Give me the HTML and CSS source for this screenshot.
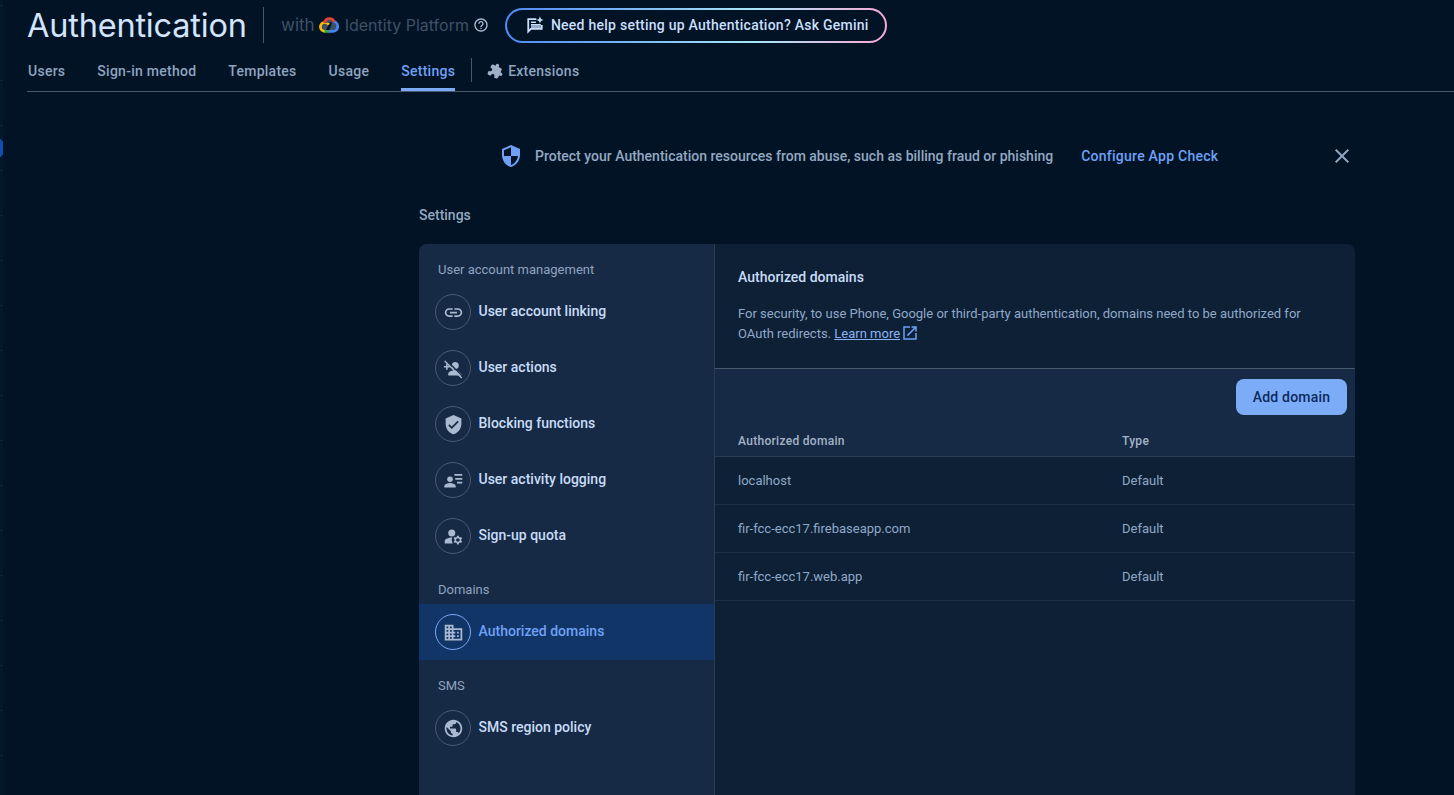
FILE: index.html
```html
<!DOCTYPE html>
<html lang="en">

<head>
    <meta charset="UTF-8">
    <meta name="viewport" content="width=device-width, initial-scale=1.0">
    <title>Authentication</title>
    <link rel="stylesheet" href="styles.css">
</head>

<body>
    <div class="rail">
        <span class="rail-dot"></span>
    </div>

    <div class="page">
        <header class="page-header">
            <div class="title-row">
                <h1 class="page-title">Authentication</h1>
                <span class="title-divider"></span>
                <div class="platform">
                    <span class="platform-with">with</span>
                    <svg class="cloud-logo" viewBox="0 0 20 16" fill="none" stroke-width="2.7">
                        <path stroke="#fbbc04" d="M6.200 14.400C3.400 14.400 1.400 12.400 1.400 9.800C1.400 7.300 3.400 5.300 5.900 5.300C7.600 5.300 9 6.200 9.800 7.600"/>
                        <path stroke="#34a853" d="M10.500 14.400H5.500"/>
                        <path stroke="#4285f4" d="M13.600 4C16.500 4.400 18.700 6.800 18.700 9.600C18.700 12.300 16.500 14.400 13.800 14.400H10"/>
                        <path stroke="#ea4335" d="M5.200 6C6 3.200 8 1.500 10.500 1.500C12.700 1.500 14.500 2.700 15.400 4.900"/>
                    </svg>
                    <span>Identity Platform</span>
                    <svg class="help-icon" viewBox="0 0 24 24"><path d="M11 18h2v-2h-2v2zm1-16C6.480 2 2 6.480 2 12s4.480 10 10 10 10-4.480 10-10S17.520 2 12 2zm0 18c-4.410 0-8-3.590-8-8s3.590-8 8-8 8 3.590 8 8-3.590 8-8 8zm0-14c-2.210 0-4 1.790-4 4h2c0-1.100.9-2 2-2s2 .9 2 2c0 2-3 1.750-3 5h2c0-2.250 3-2.500 3-5 0-2.210-1.790-4-4-4z"/></svg>
                </div>
                <button class="gemini-btn">
                    <svg class="gemini-icon" viewBox="0 0 20 20"><path d="M1.500 2.500h10v2H3.500v10.200l1.400-1.400h11.600V10h2v5.300H5.800L1.500 19.600z"/><path d="M5.500 6h5.500v1.800H5.500zM5.500 8.900h11v1.800h-11zM5.500 11.400h11v1.600h-11z"/><path d="M15.500.4l1.100 2.900 2.900 1.100-2.900 1.100-1.100 2.900-1.100-2.900-2.900-1.100 2.900-1.100z"/></svg>
                    Need help setting up Authentication? Ask Gemini
                </button>
            </div>
            <nav class="tabs">
                <a class="tab">Users</a>
                <a class="tab">Sign-in method</a>
                <a class="tab">Templates</a>
                <a class="tab">Usage</a>
                <a class="tab active">Settings</a>
                <span class="tab-divider"></span>
                <a class="tab tab-ext">
                    <svg class="ext-icon" viewBox="0 0 24 24"><path d="M20.500 11H19V7c0-1.100-.9-2-2-2h-4V3.500C13 2.120 11.880 1 10.500 1S8 2.120 8 3.500V5H4c-1.100 0-1.990.9-1.990 2v3.800H3.500c1.490 0 2.700 1.210 2.700 2.700s-1.210 2.700-2.700 2.700H2V20c0 1.100.9 2 2 2h3.800v-1.500c0-1.490 1.210-2.700 2.700-2.700 1.490 0 2.700 1.210 2.700 2.700V22H17c1.100 0 2-.9 2-2v-4h1.500c1.380 0 2.500-1.120 2.500-2.500S21.880 11 20.500 11z"/></svg>
                    Extensions
                </a>
            </nav>
        </header>

        <main class="content">
            <div class="notice">
                <svg class="notice-icon" viewBox="0 0 24 24"><path d="M12 1L3 5v6c0 5.550 3.840 10.740 9 12 5.160-1.260 9-6.450 9-12V5l-9-4zm0 10.990h7c-.53 4.120-3.280 7.790-7 8.940V12H5V6.300l7-3.110v8.800z"/></svg>
                <span class="notice-text">Protect your Authentication resources from abuse, such as billing fraud or phishing</span>
                <a class="notice-link">Configure App Check</a>
                <svg class="notice-close" viewBox="0 0 24 24"><path d="M19 6.410L17.590 5 12 10.590 6.410 5 5 6.410 10.590 12 5 17.590 6.410 19 12 13.410 17.590 19 19 17.590 13.410 12z"/></svg>
            </div>

            <h2 class="section-title">Settings</h2>

            <section class="card">
                <aside class="side">
                    <div class="side-label">User account management</div>
                    <div class="side-item">
                        <span class="side-icon"><svg viewBox="0 0 24 24"><path d="M3.900 12c0-1.710 1.390-3.100 3.100-3.100h4V7H7c-2.760 0-5 2.240-5 5s2.240 5 5 5h4v-1.900H7c-1.710 0-3.100-1.390-3.100-3.100zM8 13h8v-2H8v2zm9-6h-4v1.900h4c1.710 0 3.100 1.390 3.100 3.100s-1.390 3.100-3.100 3.100h-4V17h4c2.760 0 5-2.240 5-5s-2.240-5-5-5z"/></svg></span>
                        <span class="side-text">User account linking</span>
                    </div>
                    <div class="side-item">
                        <span class="side-icon"><svg viewBox="0 0 24 24"><circle cx="14" cy="8.500" r="4"/><path d="M6 20v-2c0-2.700 5.300-4 8-4 .9 0 2 .15 3.100.43L21.700 19v1zM1 9h2.500V6.500h1.800V9h2.500v1.800H5.300v2.500H3.500v-2.500H1z"/><path class="slash-gap" d="M4 1.500L23.500 21l-1 1L3 2.500z"/><path d="M2.500 2.800L22 22.300l-1.100 1.100L1.400 3.900z"/></svg></span>
                        <span class="side-text">User actions</span>
                    </div>
                    <div class="side-item">
                        <span class="side-icon"><svg viewBox="0 0 24 24"><path d="M12 1L3 5v6c0 5.550 3.840 10.740 9 12 5.160-1.260 9-6.450 9-12V5l-9-4zm-2 16l-4-4 1.410-1.410L10 14.170l6.590-6.590L18 9l-8 8z"/></svg></span>
                        <span class="side-text">Blocking functions</span>
                    </div>
                    <div class="side-item">
                        <span class="side-icon"><svg viewBox="0 0 24 24"><circle cx="8" cy="10.500" r="3.200"/><path d="M1.500 20v-1.800c0-2.300 4.300-3.400 6.500-3.400s6.500 1.100 6.500 3.400V20zM13 4.500h9v2h-9zM14 9h8v2h-8zM16 13.500h6v2h-6z"/></svg></span>
                        <span class="side-text">User activity logging</span>
                    </div>
                    <div class="side-item">
                        <span class="side-icon"><svg viewBox="0 0 24 24"><circle cx="10" cy="8" r="4"/><path d="M10.670 13.020c-.22-.01-.44-.02-.67-.02-2.420 0-4.680.67-6.610 1.820-.88.52-1.390 1.500-1.390 2.530V20h9.260c-.79-1.130-1.260-2.510-1.260-4 0-1.070.25-2.070.67-2.980z"/><path d="M20.750 16c0-.22-.03-.42-.06-.63l1.140-1.010-1-1.730-1.450.49c-.32-.27-.68-.48-1.080-.63L18 11h-2l-.3 1.490c-.4.15-.76.36-1.080.63l-1.450-.49-1 1.730 1.140 1.010c-.03.21-.06.41-.06.63s.03.42.06.63l-1.140 1.010 1 1.730 1.450-.49c.32.27.68.48 1.080.63L16 21h2l.3-1.490c.4-.15.76-.36 1.080-.63l1.450.49 1-1.730-1.140-1.010c.03-.21.06-.41.06-.63zM17 18c-1.100 0-2-.9-2-2s.9-2 2-2 2 .9 2 2-.9 2-2 2z"/></svg></span>
                        <span class="side-text">Sign-up quota</span>
                    </div>
                    <div class="side-label">Domains</div>
                    <div class="side-item selected">
                        <span class="side-icon"><svg viewBox="0 0 24 24"><path d="M12 7V3H2v18h20V7H12zM6 19H4v-2h2v2zm0-4H4v-2h2v2zm0-4H4V9h2v2zm0-4H4V5h2v2zm4 12H8v-2h2v2zm0-4H8v-2h2v2zm0-4H8V9h2v2zm0-4H8V5h2v2zm10 12h-8v-2h2v-2h-2v-2h2v-2h-2V9h8v10zm-2-8h-2v2h2v-2zm0 4h-2v2h2v-2z"/></svg></span>
                        <span class="side-text">Authorized domains</span>
                    </div>
                    <div class="side-label">SMS</div>
                    <div class="side-item">
                        <span class="side-icon"><svg viewBox="0 0 24 24"><path d="M12 2C6.480 2 2 6.480 2 12s4.480 10 10 10 10-4.480 10-10S17.520 2 12 2zm-1 17.930c-3.950-.49-7-3.850-7-7.930 0-.62.08-1.210.21-1.790L9 15v1c0 1.100.9 2 2 2v1.930zm6.900-2.540c-.26-.81-1-1.390-1.900-1.390h-1v-3c0-.55-.45-1-1-1H8v-2h2c.55 0 1-.45 1-1V7h2c1.100 0 2-.9 2-2v-.41c2.930 1.190 5 4.060 5 7.410 0 2.080-.8 3.970-2.100 5.390z"/></svg></span>
                        <span class="side-text">SMS region policy</span>
                    </div>
                </aside>

                <div class="detail">
                    <div class="detail-head">
                        <h3 class="detail-title">Authorized domains</h3>
                        <p class="detail-desc">For security, to use Phone, Google or third-party authentication, domains need to be authorized for OAuth redirects. <a class="learn-more">Learn more</a><svg class="open-icon" viewBox="0 0 24 24"><path d="M19 19H5V5h7V3H3v18h18v-9h-2v7zM14 3v2h3.590l-9.830 9.830 1.410 1.410L19 6.410V10h2V3h-7z"/></svg></p>
                    </div>
                    <div class="toolbar">
                        <button class="add-btn">Add domain</button>
                    </div>
                    <div class="table-row table-header">
                        <span>Authorized domain</span>
                        <span>Type</span>
                    </div>
                    <div class="table-row">
                        <span>localhost</span>
                        <span>Default</span>
                    </div>
                    <div class="table-row">
                        <span>fir-fcc-ecc17.firebaseapp.com</span>
                        <span>Default</span>
                    </div>
                    <div class="table-row">
                        <span>fir-fcc-ecc17.web.app</span>
                        <span>Default</span>
                    </div>
                </div>
            </section>
        </main>
    </div>
</body>

</html>
```

FILE: styles.css
```css
/* General Styles */
html,
body {
    height: 100%;
}

body {
    margin: 0;
    display: flex;
    overflow: hidden;
    height: 795px;
    background-color: #021325;
    font-family: 'Roboto', 'Liberation Sans', sans-serif;
    font-size: 14px;
    color: #c7dcf7;
}

svg {
    display: block;
    fill: currentColor;
    flex: none;
}

/* Left rail */
.rail {
    position: relative;
    width: 3px;
    flex: none;
    overflow: hidden;
    background-color: #04182c;
    background-image: repeating-linear-gradient(transparent 0 44px, #0e2338 44px 45px);
    background-position: 0 36px;
}

.rail-dot {
    position: absolute;
    top: 137px;
    left: -17px;
    width: 22px;
    height: 22px;
    border-radius: 50%;
    background-color: #0f4fb5;
}

.page {
    flex: 1;
    min-width: 0;
    display: flex;
    flex-direction: column;
}

/* Header */
.page-header {
    margin-left: 24px;
    height: 92px;
    box-sizing: border-box;
    border-bottom: 1px solid #47586b;
    flex: none;
}

.title-row {
    display: flex;
    align-items: center;
    height: 50px;
}

.page-title {
    margin: 0;
    width: 236px;
    font-family: 'Inter', 'Roboto', sans-serif;
    font-size: 32.5px;
    font-weight: 400;
    color: #d3e4fd;
    letter-spacing: -0.2px;
    white-space: nowrap;
}

.title-divider {
    width: 1px;
    height: 36px;
    margin-right: 17px;
    background-color: #47586b;
}

.platform {
    display: flex;
    align-items: center;
    font-family: 'Inter', 'Roboto', sans-serif;
    font-size: 16px;
    color: #3f5166;
}

.platform-with {
    font-size: 17px;
}

.cloud-logo {
    width: 20px;
    height: 16px;
    margin: 0 6px 0 4px;
}

.help-icon {
    width: 16px;
    height: 16px;
    margin-left: 4px;
    color: #a9bdd6;
}

.gemini-btn {
    display: flex;
    align-items: center;
    gap: 7px;
    box-sizing: border-box;
    width: 382px;
    height: 35px;
    margin-left: 16px;
    padding: 0 0 1px 19px;
    border: 2px solid transparent;
    border-radius: 18px;
    background: linear-gradient(#021325, #021325) padding-box,
        linear-gradient(90deg, #4d8af5, #a8e6f7 65%, #f9a8d8) border-box;
    color: #c9dffb;
    font-family: inherit;
    font-size: 14px;
    font-weight: 500;
    letter-spacing: 0.25px;
}

.gemini-icon {
    width: 18px;
    height: 18px;
}

/* Tabs */
.tabs {
    display: flex;
    align-items: stretch;
    gap: 32px;
    height: 41px;
    padding-left: 1px;
}

.tab {
    display: flex;
    align-items: center;
    box-sizing: border-box;
    height: 41px;
    padding-top: 3px;
    border-bottom: 3px solid transparent;
    color: #8fa4bf;
    font-weight: 500;
    letter-spacing: 0.26px;
}

.tab.active {
    color: #6ea1f5;
    border-bottom-color: #7baaf7;
}

.tab-divider {
    width: 1px;
    height: 24px;
    margin: 8px -16px 0 -16px;
    background-color: #47586b;
}

.tab-ext {
    gap: 4px;
}

.ext-icon {
    width: 16px;
    height: 16px;
    transform: rotate(25deg);
    color: #9fb0c6;
}

/* Content */
.content {
    flex: 1;
    min-height: 0;
    padding: 0 99px 0 416px;
}

.notice {
    display: flex;
    align-items: center;
    height: 48px;
    margin-top: 40px;
    padding-left: 80px;
}

.notice-icon {
    width: 24px;
    height: 24px;
    margin-right: 12px;
    color: #6ea1f5;
}

.notice-text {
    color: #93a9c2;
    font-weight: 500;
}

.notice-link {
    margin-left: 28px;
    color: #6ea1f5;
    font-weight: 500;
    letter-spacing: 0.25px;
}

.notice-close {
    width: 24px;
    height: 24px;
    margin-left: auto;
    margin-right: 1px;
    color: #8fa4bf;
}

.section-title {
    margin: 25px 0 19px;
    height: 20px;
    font-size: 14px;
    font-weight: 500;
    line-height: 20px;
    color: #93a9c2;
}

/* Settings card */
.card {
    display: flex;
    height: 560px;
    border-radius: 8px;
    overflow: hidden;
    background-color: #0e2035;
}

.side {
    width: 296px;
    flex: none;
    box-sizing: border-box;
    border-right: 1px solid #2b3d55;
    background-color: #172a45;
}

.side-label {
    box-sizing: border-box;
    height: 40px;
    padding: 16px 0 0 19px;
    font-size: 13px;
    line-height: 20px;
    color: #8fa4bf;
}

.side-item {
    display: flex;
    align-items: center;
    gap: 7.5px;
    height: 56px;
    padding-left: 16px;
    font-weight: 500;
    color: #c7dcf7;
}

.side-text {
    margin-bottom: 2px;
}

.side-icon {
    display: flex;
    align-items: center;
    justify-content: center;
    box-sizing: border-box;
    width: 36px;
    height: 36px;
    border: 1px solid #4a5b72;
    border-radius: 50%;
    color: #a9b9d0;
}

.side-icon svg {
    width: 21px;
    height: 21px;
}

.slash-gap {
    fill: #172a45;
}

.side-item.selected {
    background-color: #123567;
    color: #6ea1f5;
}

.side-item.selected .side-icon {
    border-color: #7baaf7;
}

/* Detail panel */
.detail {
    flex: 1;
    min-width: 0;
}

.detail-head {
    box-sizing: border-box;
    height: 125px;
    padding: 23px 24px 0 23px;
    border-bottom: 1px solid #47586b;
}

.detail-title {
    margin: 0 0 17px;
    font-size: 14px;
    font-weight: 500;
    line-height: 20px;
    color: #c7dcf7;
}

.detail-desc {
    margin: 0;
    width: 580px;
    font-size: 13px;
    line-height: 20px;
    color: #90a9c8;
}

.learn-more {
    color: #8ab4f8;
    text-decoration: underline;
}

.open-icon {
    display: inline-block;
    width: 18px;
    height: 18px;
    margin-left: 1px;
    vertical-align: -4px;
    color: #6ea1f5;
}

.toolbar {
    display: flex;
    justify-content: flex-end;
    box-sizing: border-box;
    height: 56px;
    padding: 10px 8px 0 0;
    background-color: #172a45;
}

.add-btn {
    width: 111px;
    height: 36px;
    border: none;
    border-radius: 8px;
    background-color: #7cacf8;
    color: #0b2a5c;
    font-family: inherit;
    font-size: 14px;
    font-weight: 500;
    letter-spacing: 0.2px;
}

.table-row {
    display: grid;
    grid-template-columns: 384px 1fr;
    align-items: center;
    box-sizing: border-box;
    height: 48px;
    padding-left: 23px;
    border-bottom: 1px solid #1e3048;
    font-size: 13px;
    color: #90a9c8;
}

.table-header {
    height: 32px;
    background-color: #172a45;
    border-bottom-color: #2b3d55;
    font-size: 12px;
    font-weight: 500;
    letter-spacing: 0.3px;
    color: #a3b3c7;
}
```
